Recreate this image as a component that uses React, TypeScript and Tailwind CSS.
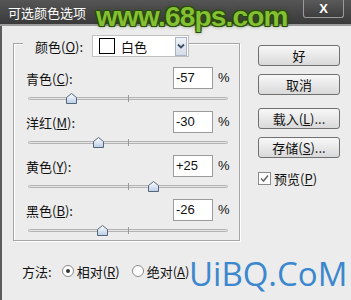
import React from "react";

const cjk = '"Noto Sans CJK SC", "Noto Sans", sans-serif';

type Row = { label: string; key: string; value: string; v: number };

const rows: Row[] = [
  { label: "青色", key: "C", value: "-57", v: -57 },
  { label: "洋红", key: "M", value: "-30", v: -30 },
  { label: "黄色", key: "Y", value: "+25", v: 25 },
  { label: "黑色", key: "B", value: "-26", v: -26 },
];

function Thumb() {
  return (
    <svg width="11" height="11" viewBox="0 0 11 11">
      <defs>
        <linearGradient id="tg" x1="0" y1="0" x2="0" y2="1">
          <stop offset="0" stopColor="#ffffff" />
          <stop offset="1" stopColor="#b9cde6" />
        </linearGradient>
      </defs>
      <path d="M0.5 10.5 V4.5 L5.5 0.5 L10.5 4.5 V10.5 Z" fill="url(#tg)" stroke="#56657a" strokeWidth="1" />
    </svg>
  );
}

function Slider({ v }: { v: number }) {
  const left = ((v + 100) / 200) * 200 - 5;
  return (
    <div className="relative h-[22px] w-[200px] ml-[14px]">
      <div className="mt-[8px] h-[3px] rounded-full border border-[#b4b4b4] bg-[#e4e4e4]" />
      <div className="absolute left-[100px] top-[6px] h-[7px] w-px bg-[#9a9a9a]" />
      <div className="absolute top-[4px]" style={{ left }}>
        <Thumb />
      </div>
    </div>
  );
}

function Btn({ children }: { children: React.ReactNode }) {
  return (
    <div className="flex h-[21px] w-[82px] items-center justify-center rounded-[3px] border border-[#707070] bg-gradient-to-b from-[#f8f8f8] to-[#d9d9d9] text-[13px] text-[#111]">
      {children}
    </div>
  );
}

export default function App() {
  return (
    <div
      className="relative h-[300px] w-[351px] overflow-hidden bg-[#ececec] text-[#111]"
      style={{ fontFamily: cjk }}
    >
      {/* title bar */}
      <div className="flex h-[24px] items-center justify-between bg-gradient-to-b from-[#555555] to-[#3a3a3a] pl-[8px] pr-[7px]">
        <span className="text-[13px] text-white leading-none">可选颜色选项</span>
        <div className="mb-[6px] flex h-[18px] w-[41px] items-center justify-center rounded-b-[3px] border border-[#9a9a9a] border-t-0 bg-gradient-to-b from-[#5a5a5a] to-[#3e3e3e] text-[13px] font-bold text-white leading-none" style={{ fontFamily: '"Liberation Sans", sans-serif' }}>
          X
        </div>
      </div>
      <div className="h-[2px] bg-[#9c9c9c]" />

      {/* body */}
      <div className="flex h-[274px] border-l-2 border-[#5c5c5c]">
        {/* left column */}
        <div className="w-[238px] pl-[11px] pt-[17px]">
          <div className="relative h-[198px] w-[227px] border border-[#a6a6a6] shadow-[inset_1px_1px_0_#ffffff,1px_1px_0_#ffffff]">
            {/* legend */}
            <div className="absolute left-[9px] top-[-9px] flex items-center bg-[#ececec] pl-[12px]">
              <span className="text-[13px] leading-none">
                颜色(<span className="underline">O</span>):
              </span>
              <div className="ml-[9px] flex h-[22px] w-[97px] items-center border border-[#c0c0c0] bg-white">
                <div className="ml-[6px] h-[16px] w-[16px] border border-black bg-white" />
                <span className="ml-[6px] text-[13px] leading-none">白色</span>
                <div className="ml-auto mr-[1px] flex h-[19px] w-[12px] items-center justify-center border border-[#a9b4c4] bg-gradient-to-b from-[#eef2f8] to-[#d6dde8]">
                  <svg width="8" height="6" viewBox="0 0 8 6">
                    <path d="M1 1.5 L4 4.5 L7 1.5" fill="none" stroke="#3c4d68" strokeWidth="1.8" />
                  </svg>
                </div>
              </div>
            </div>

            <div className="flex flex-col pt-[23px]">
              {rows.map((r) => (
                <div key={r.key} className="flex flex-col">
                  <div className="flex h-[22px] items-center pl-[12px]">
                    <span className="w-[147px] text-[13px] leading-none">
                      {r.label}(<span className="underline">{r.key}</span>):
                    </span>
                    <div
                      className="flex h-[22px] w-[40px] items-center border border-[#9c9c9c] bg-white pl-[2px] text-[13px]"
                      style={{ fontFamily: '"Liberation Sans", sans-serif' }}
                    >
                      {r.value}
                    </div>
                    <span className="ml-[5px] text-[13px]" style={{ fontFamily: '"Liberation Sans", sans-serif' }}>
                      %
                    </span>
                  </div>
                  <Slider v={r.v} />
                </div>
              ))}
            </div>
          </div>

          {/* method row */}
          <div className="ml-[9px] mt-[22px] flex h-[16px] items-center text-[13px] leading-none">
            <span>方法:</span>
            <div className="ml-[10px] flex h-[12px] w-[12px] items-center justify-center rounded-full border border-[#8a8a8a] bg-white">
              <div className="h-[4px] w-[4px] rounded-full bg-[#333]" />
            </div>
            <span className="ml-[3px]">
              相对(<span className="underline">R</span>)
            </span>
            <div className="ml-[12px] h-[12px] w-[12px] rounded-full border border-[#8a8a8a] bg-white" />
            <span className="ml-[3px]">
              绝对(<span className="underline">A</span>)
            </span>
          </div>
        </div>

        {/* right column */}
        <div className="flex flex-col pl-[18px] pt-[19px]">
          <Btn>好</Btn>
          <div className="mt-[8px]">
            <Btn>取消</Btn>
          </div>
          <div className="mt-[13px]">
            <Btn>
              载入(<span className="underline">L</span>)...
            </Btn>
          </div>
          <div className="mt-[8px]">
            <Btn>
              存储(<span className="underline">S</span>)...
            </Btn>
          </div>
          <div className="mt-[14px] flex items-center">
            <div className="flex h-[13px] w-[13px] items-center justify-center border border-[#8a8a8a] bg-white">
              <svg width="9" height="9" viewBox="0 0 9 9">
                <path d="M1 4.5 L3.5 7 L8 1.5" fill="none" stroke="#6a6a6a" strokeWidth="1.6" />
              </svg>
            </div>
            <span className="ml-[3px] text-[13px] leading-none">
              预览(<span className="underline">P</span>)
            </span>
          </div>
        </div>
      </div>

      {/* watermarks */}
      <div
        className="absolute left-[96px] top-[-4px] text-[28px] font-bold tracking-[-0.8px] text-[#84c032] [text-shadow:0_0_1px_#1f3d08,1px_1px_0_#2a4f0c,-1px_-1px_0_#2a4f0c,1px_-1px_0_#2a4f0c,-1px_1px_0_#2a4f0c,0_0_4px_#2a4f0c]"
        style={{ fontFamily: '"Liberation Sans", sans-serif' }}
      >
        www.68ps.com
      </div>
      <div
        className="absolute left-[189px] top-[249px] text-[33px] text-[#3b88cf]"
        style={{ fontFamily: '"Open Sans", sans-serif' }}
      >
        UiBQ.CoM
      </div>
    </div>
  );
}
